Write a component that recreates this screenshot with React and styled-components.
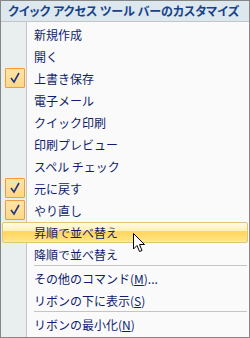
import React from 'react';
import styled, {createGlobalStyle} from 'styled-components';

const GlobalStyle = createGlobalStyle`
  html, body {
    margin: 0;
    padding: 0;
    background: #ffffff;
  }
`

const Menu = styled.div`
  position: relative;
  width: 248px;
  height: 336px;
  border: 1px solid #868686;
  background: #fafafa;
  font-family: "Noto Sans CJK JP", "Noto Sans", sans-serif;
  overflow: hidden;
`

const Header = styled.div`
  height: 20px;
  line-height: 20px;
  padding-left: 7px;
  background: #dde7ee;
  border-bottom: 1px solid #c5c5c5;
  color: #15428b;
  font-size: 12px;
  font-weight: bold;
  font-feature-settings: "palt";
  white-space: nowrap;
`

const Body = styled.div`
  display: flex;
  flex-direction: column;
  padding-top: 1px;
  background: linear-gradient(to right, #e9eeee 0, #e9eeee 25px, #c5c5c5 25px, #c5c5c5 26px, #fafafa 26px);
  height: 100%;
`

const Item = styled.div`
  position: relative;
  height: 22px;
  display: flex;
  align-items: center;
  padding-left: 33px;
  font-size: 12px;
  color: #0f1d6c;
  white-space: nowrap;
  ${p => p.$active && `
    &::before {
      content: '';
      position: absolute;
      left: 1px;
      right: 1px;
      top: 1px;
      bottom: 0;
      border: 1px solid #e1c577;
      border-radius: 2px;
      background: linear-gradient(to bottom, #fffbe6 0%, #fff1b8 40%, #ffd65e 45%, #ffe07a 85%, #ffec9c 100%);
    }
  `}
`

const Label = styled.span`
  position: relative;
`

const Check = styled.span`
  position: absolute;
  left: 4px;
  top: 1px;
  width: 18px;
  height: 18px;
  border: 1px solid #f29a3c;
  border-radius: 1px;
  background: linear-gradient(to bottom, #fde5a6, #fcd78a);
  display: flex;
  align-items: center;
  justify-content: center;
`

const Separator = styled.div`
  height: 2px;
  margin-left: 33px;
  margin-right: 2px;
  border-top: 1px solid #c5c5c5;
  box-sizing: border-box;
`

const U = styled.span`
  text-decoration: underline;
`

const Cursor = styled.svg`
  position: absolute;
  left: 132px;
  top: 232px;
`

const items = [
    {label: '新規作成'},
    {label: '開く'},
    {label: '上書き保存', checked: true},
    {label: '電子メール'},
    {label: 'クイック印刷'},
    {label: '印刷プレビュー'},
    {label: 'スペル チェック'},
    {label: '元に戻す', checked: true},
    {label: 'やり直し', checked: true},
    {label: '昇順で並べ替え', active: true},
    {label: '降順で並べ替え'},
]

function CheckMark() {
    return (
        <svg width="12" height="12" viewBox="0 0 12 12">
            <path d="M2 6 L5 10 L10 1" fill="none" stroke="#26357f" strokeWidth="1.6" />
        </svg>
    );
}

export default function App() {
    return (
        <>
            <GlobalStyle />
            <Menu>
                <Header>クイック アクセス ツール バーのカスタマイズ</Header>
                <Body>
                    {items.map(it => (
                        <Item key={it.label} $active={it.active}>
                            {it.checked && <Check><CheckMark /></Check>}
                            <Label>{it.label}</Label>
                        </Item>
                    ))}
                    <Separator />
                    <Item><Label>その他のコマンド(<U>M</U>)...</Label></Item>
                    <Item><Label>リボンの下に表示(<U>S</U>)</Label></Item>
                    <Separator />
                    <Item><Label>リボンの最小化(<U>N</U>)</Label></Item>
                </Body>
                <Cursor width="13" height="21" viewBox="0 0 13 21">
                    <path d="M0.5 0.5 L0.5 16 L4 12.5 L6.5 18.5 L9 17.5 L6.5 11.5 L11.5 11.5 Z" fill="#ffffff" stroke="#000000" strokeWidth="1" />
                </Cursor>
            </Menu>
        </>
    );
}
